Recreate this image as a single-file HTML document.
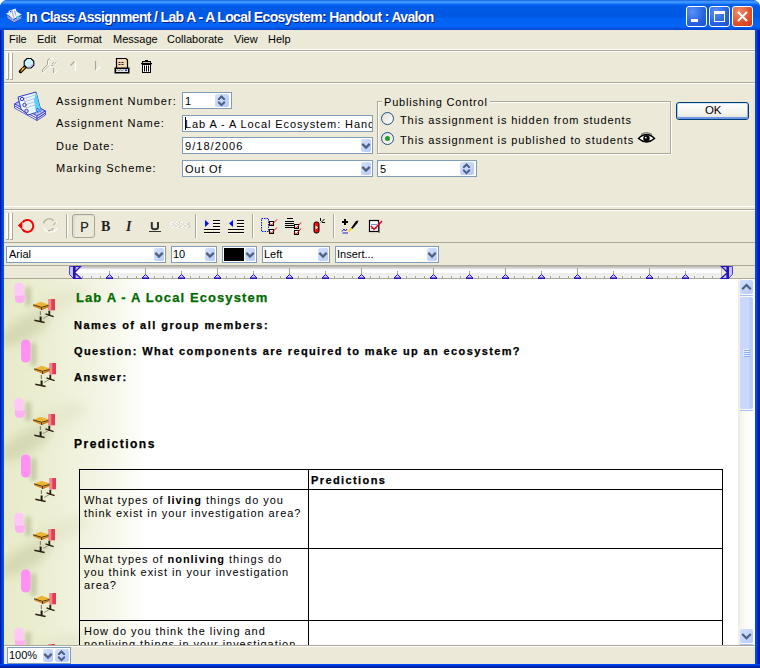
<!DOCTYPE html>
<html><head><meta charset="utf-8">
<style>
*{margin:0;padding:0;box-sizing:border-box}
html,body{width:760px;height:668px;overflow:hidden;background:#fff}
body{position:relative;font-family:"Liberation Sans",sans-serif;font-size:11px;line-height:13px;color:#000}
.a{position:absolute;white-space:nowrap}
#frame{left:0;top:0;width:760px;height:668px;border-radius:8px 8px 0 0;background:linear-gradient(to right,#001EA0 0,#001EA0 1px,#0030C8 1px,#0030C8 2px,#0046E8 2px,#0046E8 3px,#0052F4 3px,#0052F4 755px,#0046EC 755px,#0046EC 757px,#0030C8 757px,#0030C8 758px,#001EA0 758px)}
#title{left:0;top:0;width:760px;height:30px;border-radius:7px 7px 0 0;
 background:linear-gradient(to bottom,#0A48D8 0px,#3D95FF 1px,#3D95FF 3px,#0A6AF8 4px,#005BE8 6px,#0058E2 17px,#0062F2 18px,#0064F4 26px,#0058E8 28px,#0042C8 30px)}
#client{left:4px;top:30px;width:751px;height:634px;background:#ECE9D8}
#bottomframe{left:0;top:664px;width:760px;height:4px;background:linear-gradient(to bottom,#0046EC 0,#0046EC 1px,#0036D0 1px,#0036D0 2px,#0028B8 2px,#0028B8 3px,#001EA0 3px)}
.ttl{left:26px;top:10px;line-height:14px;color:#fff;font-weight:bold;font-size:14px;text-shadow:1px 1px 0 #0A1E8A;letter-spacing:-0.65px}
.tb{position:absolute;width:21px;height:21px;border:1px solid #fff;border-radius:3px;background:radial-gradient(circle at 30% 25%,#5A90F8 0,#2663E0 60%,#1E50D0 100%)}
.tbx{background:radial-gradient(circle at 30% 25%,#EE8E70 0,#E0502A 60%,#C8401C 100%)}
.sepg{background:#ACA899;height:1px}
.sepw{background:#fff;height:1px}
.lbl{letter-spacing:1px}
.box{background:#fff;border:1px solid #7F9DB9}
.cbtn{position:absolute;border-radius:2px;background:linear-gradient(to bottom right,#D6E2FD 0,#C6D6FC 45%,#B6CAF8 100%)}
.chev{position:absolute;left:3px;top:5px;width:9px;height:6px}
.grip{position:absolute;width:7px}
.grip:before,.grip:after{content:"";position:absolute;top:0;bottom:0;width:2px;background:#fff;border-right:1px solid #ACA899;border-bottom:1px solid #ACA899}
.grip:before{left:0}.grip:after{left:4px}
.vsep{position:absolute;width:2px;border-left:1px solid #ACA899;border-right:1px solid #fff}
.doc{font-weight:bold;-webkit-text-stroke:0.25px #000}
.tt{line-height:13px;letter-spacing:0.95px}
.sb{position:absolute;width:13px;border-radius:2px;background:linear-gradient(to bottom right,#D4E0FD,#C2D3FB 60%,#B8CBF8)}
</style></head><body>
<div id="frame" class="a"></div>
<div id="title" class="a"></div>
<div class="a ttl">In Class Assignment / Lab A - A Local Ecosystem: Handout : Avalon</div>

<!-- title buttons -->
<div class="a tb" style="left:686px;top:6px"><div class="a" style="left:4px;top:12px;width:7px;height:3px;background:#fff"></div></div>
<div class="a tb" style="left:709px;top:6px"><div class="a" style="left:4px;top:4px;width:11px;height:11px;border:1px solid #fff;border-top-width:3px"></div></div>
<div class="a tb tbx" style="left:732px;top:6px"><svg class="a" style="left:3px;top:3px" width="13" height="13" viewBox="0 0 13 13"><path d="M2 2L11 11M11 2L2 11" stroke="#fff" stroke-width="2"/></svg></div>
<!-- app icon -->
<svg class="a" style="left:0;top:0" width="26" height="28" viewBox="0 0 26 28">
 <path d="M6 13.8L14 18.6L21.8 14.4L13.5 9.8Z" fill="#D8F0FF"/>
 <path d="M6.5 15.3L14 19.8L21.5 15.8M7 16.8L14 21L21.5 17.2M8 18.3L14 22.3L21 18.6" fill="none" stroke="#4038A8" stroke-width="0.9"/>
 <path d="M7 15.8L14 20.4L21.5 16.5M7.5 17.4L14 21.6L21.3 17.9" fill="none" stroke="#E0F0FF" stroke-width="0.7"/>
 <path d="M8.5 11L15.5 8.5L18.3 16.2L13 19L9.8 16Z" fill="#F4FAFF"/>
 <path d="M12 11L13.5 16.5M14.5 10.5L16 15.5" stroke="#A0A8F0" stroke-width="1.2"/>
 <rect x="10" y="11" width="1.3" height="1.3" fill="#2050E0"/>
 <rect x="11.2" y="9.8" width="1" height="1" fill="#F06040"/>
 <rect x="13.2" y="16.4" width="1" height="1" fill="#F06040"/>
 <path d="M16 16.5L18.5 15.5L19.5 17.5L17 18.5Z" fill="#50D0E0"/>
</svg>
<div id="client" class="a"></div>
<div id="bottomframe" class="a"></div>

<!-- menu -->
<div class="a" style="left:9px;top:33px">File</div>
<div class="a" style="left:37px;top:33px">Edit</div>
<div class="a" style="left:67px;top:33px">Format</div>
<div class="a" style="left:113px;top:33px">Message</div>
<div class="a" style="left:167px;top:33px">Collaborate</div>
<div class="a" style="left:234px;top:33px">View</div>
<div class="a" style="left:268px;top:33px">Help</div>
<div class="a sepw" style="left:4px;top:49px;width:751px"></div>
<div class="a sepg" style="left:4px;top:50px;width:751px"></div>
<div class="a sepw" style="left:4px;top:51px;width:751px"></div>
<div class="grip" style="left:6px;top:53px;height:27px"></div>
<div class="a sepg" style="left:4px;top:82px;width:751px"></div>
<div class="a sepw" style="left:4px;top:83px;width:751px"></div>


<!-- main toolbar icons -->
<svg class="a" style="left:16px;top:55px" width="144" height="22" viewBox="16 55 144 22">
 <path d="M20.5 71.5L25.5 66.5" stroke="#000" stroke-width="3.4" stroke-linecap="round"/>
 <path d="M20.6 71.4L25 67" stroke="#F89020" stroke-width="1.4"/>
 <path d="M22 69.5L23.5 68" stroke="#F8E020" stroke-width="1.2"/>
 <path d="M27 58.5H31L33.8 61.3V65.2L31 68H27L24.2 65.2V61.3Z" fill="#C8F4FF" stroke="#000" stroke-width="1.1"/>
 <path d="M27.5 67H30.5L32.8 64.7" stroke="#B8A8F0" stroke-width="1.2" fill="none"/>
 <g fill="none" stroke-width="1" stroke-linecap="square">
  <path d="M49.5 58.5L47.5 60.5V64.5L42.5 69.5V71.5" stroke="#ACA899"/>
  <path d="M49 66.5L44.5 71" stroke="#ACA899"/>
  <path d="M52.5 63.5L53.5 62.5" stroke="#ACA899"/>
  <path d="M51.5 65.5H53.5L56.5 62" stroke="#ACA899"/>
  <path d="M53.5 68.5V72.5" stroke="#ACA899"/>
  <path d="M48.5 61.5V64.5M50.5 58.5H53.5" stroke="#fff"/>
  <path d="M43.5 72.5L49.5 67H52.5L57.5 62" stroke="#fff"/>
  <path d="M54.5 73.5L56.5 71.5" stroke="#fff"/>
 </g>
 <path d="M70.5 65.5L74.5 61.5" stroke="#ACA899" stroke-width="1.3"/>
 <path d="M75.5 61.5V71" stroke="#fff" stroke-width="1.2"/>
 <path d="M95.5 61V70" stroke="#ACA899" stroke-width="1.2"/>
 <path d="M96 70.5L100.5 66.5" stroke="#fff" stroke-width="1.3"/>
 <path d="M116.5 58.5H126L127.5 60V68.5H116.5Z" fill="#F6D9B2" stroke="#000" stroke-width="1.2"/>
 <path d="M118.5 62.5H120.5M121.5 62.5H123.5M118.5 64.5H120.5M121.5 64.5H123.5" stroke="#222" stroke-width="1"/>
 <rect x="114.5" y="67.5" width="15" height="6" fill="#000"/>
 <rect x="116" y="69" width="12" height="3" fill="#E0E0E0"/>
 <path d="M116 71L117.5 69.5L119 71L120.5 69.5L122 71L123.5 69.5" fill="none" stroke="#707070" stroke-width="0.8"/>
 <rect x="125" y="69.5" width="2" height="1.5" fill="#2030F0"/>
 <rect x="145" y="60" width="3" height="1.2" fill="#000"/>
 <rect x="142.5" y="61.5" width="8" height="2" fill="#C8C4B0" stroke="#000" stroke-width="1"/>
 <rect x="141" y="63" width="11" height="1.3" fill="#000"/>
 <rect x="142.5" y="64.5" width="8" height="8" fill="#fff" stroke="#000" stroke-width="1"/>
 <path d="M144.5 65.5V71.5M146.5 65.5V71.5M148.5 65.5V71.5" stroke="#000" stroke-width="1"/>
</svg>
<!-- form icon -->
<svg class="a" style="left:12px;top:90px" width="36" height="36" viewBox="12 90 36 36">
 <path d="M14.5 104L37 116L45.5 111L23 99Z" fill="#B8BCF8" stroke="#3838C8" stroke-width="1"/>
 <path d="M14.5 104V106L37 118.5V116Z" fill="#fff" stroke="#3838C8" stroke-width="0.8"/>
 <path d="M14.5 106V108L37 120.5V118.5Z" fill="#fff" stroke="#3838C8" stroke-width="0.8"/>
 <path d="M37 116L45.5 111V113L37 118.5ZM37 118.5L45.5 113V115L37 120.5Z" fill="#E0E4FF" stroke="#3838C8" stroke-width="0.8"/>
 <path d="M18 97L36 92L41 111L28 115L21 109Z" fill="#E8F8FF" stroke="#3838C8" stroke-width="1"/>
 <path d="M36 92L41 111L36 113L34 100Z" fill="#50D8F8"/>
 <path d="M24 102L36 98M25 105L37 101M26 108L38 104M23 99L35 95" stroke="#A8B0F0" stroke-width="0.8"/>
 <path d="M24 97.5L27 112" stroke="#F07070" stroke-width="0.8" stroke-dasharray="1.2 1.2"/>
 <circle cx="22" cy="99" r="1.7" fill="none" stroke="#3838C8" stroke-width="1"/>
 <circle cx="24.5" cy="105" r="1.7" fill="none" stroke="#3838C8" stroke-width="1"/>
 <circle cx="26.5" cy="111" r="1.7" fill="none" stroke="#3838C8" stroke-width="1"/>
 <path d="M37 108L39.5 110L37 112Z" fill="#fff" stroke="#3838C8" stroke-width="0.8"/>
</svg>
<!-- eye icon -->
<svg class="a" style="left:637px;top:131px" width="19" height="15" viewBox="0 0 19 15">
 <path d="M1.5 7.5Q9.5 -0.5 17.5 7.5Q9.5 14.5 1.5 7.5Z" fill="#fff" stroke="#000" stroke-width="1.5"/>
 <circle cx="9.5" cy="7.3" r="3.2" fill="#000"/>
 <circle cx="8.8" cy="6.6" r="0.9" fill="#fff"/>
 <path d="M4 3.5Q9.5 0 15 3.5" fill="none" stroke="#555" stroke-width="1"/>
</svg>

<!-- form -->
<div class="a lbl" style="left:56px;top:95px">Assignment Number:</div>
<div class="a lbl" style="left:56px;top:117px">Assignment Name:</div>
<div class="a lbl" style="left:56px;top:140px">Due Date:</div>
<div class="a lbl" style="left:56px;top:162px">Marking Scheme:</div>


<!-- form controls -->
<div class="a box" style="left:182px;top:92px;width:50px;height:17px"><div class="a" style="left:2px;top:2px">1</div><div class="cbtn" style="left:32px;top:1px;width:14px;height:13px"><svg class="a" style="left:0;top:0" width="14" height="13" viewBox="0 0 14 13"><path d="M2.6 6L6.5 2.1L10.4 6H8.6L6.5 3.9L4.4 6Z M2.6 7.6L6.5 11.5L10.4 7.6H8.6L6.5 9.7L4.4 7.6Z" fill="#4D6185"/><path d="M3.2 5.5L6.5 2.2L9.8 5.5M3.2 8.1L6.5 11.4L9.8 8.1" fill="none" stroke="#4D6185" stroke-width="1.6"/></svg></div></div>
<div class="a box" style="left:182px;top:115px;width:191px;height:17px;overflow:hidden"><div class="a" style="left:2px;top:2px;letter-spacing:0.9px">Lab A - A Local Ecosystem: Handout</div><div class="a" style="left:2px;top:1px;width:1px;height:13px;background:#000"></div></div>
<div class="a box" style="left:182px;top:137px;width:191px;height:17px"><div class="a" style="left:2px;top:2px;letter-spacing:1.05px">9/18/2006</div>
 <div class="cbtn" style="left:178px;top:1px;width:10px;height:13px"><svg class="a" style="left:0;top:0" width="10" height="13" viewBox="0 0 10 13"><path d="M1.3 4.9L5 8.6L8.7 4.9" fill="none" stroke="#4D6185" stroke-width="2.3"/></svg></div></div>
<div class="a box" style="left:182px;top:160px;width:191px;height:17px"><div class="a" style="left:2px;top:2px;letter-spacing:0.8px">Out Of</div>
 <div class="cbtn" style="left:178px;top:1px;width:10px;height:13px"><svg class="a" style="left:0;top:0" width="10" height="13" viewBox="0 0 10 13"><path d="M1.3 4.9L5 8.6L8.7 4.9" fill="none" stroke="#4D6185" stroke-width="2.3"/></svg></div></div>
<div class="a box" style="left:377px;top:160px;width:100px;height:17px"><div class="a" style="left:2px;top:2px">5</div>
 <div class="cbtn" style="left:82px;top:1px;width:14px;height:13px"><svg class="a" style="left:0;top:0" width="14" height="13" viewBox="0 0 14 13"><path d="M2.6 6L6.5 2.1L10.4 6H8.6L6.5 3.9L4.4 6Z M2.6 7.6L6.5 11.5L10.4 7.6H8.6L6.5 9.7L4.4 7.6Z" fill="#4D6185"/><path d="M3.2 5.5L6.5 2.2L9.8 5.5M3.2 8.1L6.5 11.4L9.8 8.1" fill="none" stroke="#4D6185" stroke-width="1.6"/></svg></div></div>

<!-- publishing group -->
<div class="a" style="left:377px;top:101px;width:294px;height:53px;border:1px solid #ACA899;box-shadow:inset 1px 1px 0 #fff,1px 1px 0 #fff"></div>
<div class="a" style="left:382px;top:96px;padding:0 2px;background:#ECE9D8;letter-spacing:0.8px">Publishing Control</div>
<svg class="a" style="left:381px;top:112px" width="13" height="13" viewBox="0 0 13 13"><defs><linearGradient id="rg" x1="0" y1="0" x2="1" y2="1"><stop offset="0" stop-color="#DCDCD7"/><stop offset="1" stop-color="#fff"/></linearGradient></defs><circle cx="6.5" cy="6.5" r="6" fill="url(#rg)" stroke="#1C5180" stroke-width="1"/></svg>
<svg class="a" style="left:381px;top:132px" width="13" height="13" viewBox="0 0 13 13"><circle cx="6.5" cy="6.5" r="6" fill="url(#rg)" stroke="#1C5180" stroke-width="1"/><circle cx="6.5" cy="6.5" r="2.5" fill="#21A121"/></svg>
<div class="a lbl" style="left:400px;top:114px;letter-spacing:0.9px">This assignment is hidden from students</div>
<div class="a lbl" style="left:400px;top:134px;letter-spacing:0.9px">This assignment is published to students</div>
<!-- OK button -->
<div class="a" style="left:676px;top:102px;width:73px;height:18px;border:1px solid #003C74;border-radius:3px;background:linear-gradient(to bottom,#FFFFFF,#F4F4EE 60%,#E6E4DA);box-shadow:inset 0 1px 0 #CEE7FF,inset 1px 0 0 #A8C8F4,inset -1px 0 0 #8EB4EE,inset 0 -2px 0 #6C98E8"></div>
<div class="a" style="left:705px;top:104px;letter-spacing:-0.2px;font-size:11.5px">OK</div>

<div class="a sepw" style="left:4px;top:206px;width:751px"></div>
<div class="a sepg" style="left:4px;top:209px;width:751px"></div>
<div class="a sepw" style="left:4px;top:210px;width:751px"></div>
<div class="grip" style="left:6px;top:213px;height:27px"></div>
<div class="a sepg" style="left:4px;top:242px;width:751px"></div>

<!-- format toolbar -->
<div class="vsep" style="left:66px;top:214px;height:24px"></div>
<div class="a" style="left:72px;top:214px;width:23px;height:24px;border:1px solid #A8A590;border-radius:3px;background:#ECE9D8;box-shadow:inset 3px 2px 0 -1px #DCDCD8"></div>
<div class="a" style="left:80px;top:221px;font-family:'Liberation Mono',monospace;font-size:15px;line-height:15px;color:#222;font-weight:normal">P</div>
<div class="a" style="left:101px;top:220px;font-family:'Liberation Serif',serif;font-size:14px;line-height:14px;font-weight:bold;color:#222">B</div>
<div class="a" style="left:126px;top:220px;font-family:'Liberation Serif',serif;font-size:14px;line-height:14px;font-style:italic;font-weight:bold;color:#222">I</div>
<svg class="a" style="left:148px;top:220px" width="14" height="13" viewBox="148 220 14 13"><path d="M151.8 222V227.3Q151.8 229.2 154.8 229.2Q158 229.2 158 227.3V222" fill="none" stroke="#333" stroke-width="2"/><rect x="149" y="231" width="12" height="1" fill="#333"/></svg>
<div class="a" style="left:170px;top:220px;font-size:9px;line-height:10px;font-weight:bold;color:#fff;text-shadow:1px 0 0 #B0AD9C;letter-spacing:-0.6px;transform:scaleX(0.85);transform-origin:0 0">SSSS</div>
<svg class="a" style="left:14px;top:212px" width="380" height="26" viewBox="14 212 380 26">
 <path d="M22.2 229A6 6 0 1 0 22.6 222.3" fill="none" stroke="#F00000" stroke-width="2"/>
 <path d="M17.8 225.6L22.3 221.2V229.4Z" fill="#F00000"/>
 <path d="M43.5 223.5A6 6 0 0 1 53.5 220.5" fill="none" stroke="#ACA899" stroke-width="1.1"/>
 <path d="M43.8 227.5A6 6 0 0 0 52 231.5" fill="none" stroke="#fff" stroke-width="1.1"/>
 <path d="M48 230.5A5 5 0 0 0 53.5 228" fill="none" stroke="#ACA899" stroke-width="1.1"/>
 <path d="M53 232A6 6 0 0 0 57 228" fill="none" stroke="#fff" stroke-width="1.1"/>
 <path d="M55.5 222.5L53.5 225" stroke="#ACA899" stroke-width="1.1"/>
 <path d="M56.5 221.5V223" stroke="#fff" stroke-width="1.1"/>
 <g fill="#000">
  <rect x="213" y="220" width="7" height="1"/><rect x="213" y="223" width="7" height="1"/><rect x="213" y="226" width="7" height="1"/>
  <rect x="204" y="229" width="16" height="1"/><rect x="204" y="232" width="16" height="1"/>
  <rect x="237" y="220" width="7" height="1"/><rect x="237" y="223" width="7" height="1"/><rect x="237" y="226" width="7" height="1"/>
  <rect x="228" y="229" width="16" height="1"/><rect x="228" y="232" width="16" height="1"/>
 </g>
 <g fill="#FFF8E0">
  <rect x="213" y="221" width="7" height="1"/><rect x="213" y="224" width="7" height="1"/><rect x="213" y="227" width="7" height="1"/>
  <rect x="204" y="230" width="16" height="1"/><rect x="204" y="233" width="16" height="1"/>
  <rect x="237" y="221" width="7" height="1"/><rect x="237" y="224" width="7" height="1"/><rect x="237" y="227" width="7" height="1"/>
  <rect x="228" y="230" width="16" height="1"/><rect x="228" y="233" width="16" height="1"/>
 </g>
 <path d="M205 220V227L209 223.5Z" fill="#0010F0"/>
 <path d="M233 220V227L229 223.5Z" fill="#0010F0"/>
 <rect x="261.5" y="218.5" width="7" height="13" fill="none" stroke="#0018E8" stroke-width="1" stroke-dasharray="1.5 1"/>
 <rect x="269.5" y="221.5" width="4" height="4" fill="#fff" stroke="#000" stroke-width="1"/>
 <rect x="269.5" y="229.5" width="4" height="4" fill="#fff" stroke="#000" stroke-width="1"/>
 <path d="M270 223.5L271.5 225L277 219.5M270 231.5L271.5 233L277 227.5" fill="none" stroke="#F00000" stroke-width="1"/>
 <g fill="#000"><rect x="287" y="218" width="6" height="1"/><rect x="285" y="221" width="9" height="1"/><rect x="285" y="223" width="9" height="1"/><rect x="285" y="225" width="9" height="1"/><rect x="285" y="227" width="9" height="1"/></g>
 <rect x="294.5" y="224.5" width="4" height="4" fill="#fff" stroke="#000" stroke-width="1"/>
 <rect x="294.5" y="230.5" width="4" height="4" fill="#fff" stroke="#000" stroke-width="1"/>
 <path d="M295 226.5L296.5 228L301 222.5M295 232.5L296.5 234L301 228.5" fill="none" stroke="#F00000" stroke-width="1"/>
 <rect x="314" y="222" width="5" height="11" rx="2" fill="#F01010" stroke="#000" stroke-width="1"/>
 <path d="M315.5 225.5L318 227.5L315.5 229.5Z" fill="#fff"/>
 <path d="M320.5 218V221M321 222.5L324.5 219M322 222.5H325" stroke="#000" stroke-width="1" fill="none"/>
 <path d="M342 222H348M345 219V225" stroke="#000" stroke-width="2"/>
 <path d="M351 228L356 221L358.5 220.5L357.5 223L352.5 229Z" fill="#000"/>
 <path d="M348.5 231.5L351.5 228.5" stroke="#F8D020" stroke-width="1.8"/>
 <path d="M342 231.5L344 229L345.5 231L347 229M342.5 233H348" fill="none" stroke="#2020D0" stroke-width="1"/>
 <rect x="369.5" y="220.5" width="9" height="11" fill="#fff" stroke="#000" stroke-width="1.2"/>
 <rect x="378.5" y="222" width="1.2" height="11" fill="#555"/>
 <path d="M371 224.5H377M371 228.5H377" stroke="#8888E8" stroke-width="1"/>
 <path d="M371 226L374 229.5L382 221" fill="none" stroke="#F00020" stroke-width="1.5"/>
</svg>
<div class="vsep" style="left:195px;top:214px;height:24px"></div>
<div class="vsep" style="left:252px;top:214px;height:24px"></div>
<div class="vsep" style="left:333px;top:214px;height:24px"></div>

<!-- font row -->
<div class="a box" style="left:6px;top:246px;width:160px;height:17px"><div class="a" style="left:2px;top:1px">Arial</div>
 <div class="cbtn" style="left:147px;top:1px;width:10px;height:13px"><svg class="a" style="left:0;top:0" width="10" height="13" viewBox="0 0 10 13"><path d="M1.3 4.9L5 8.6L8.7 4.9" fill="none" stroke="#4D6185" stroke-width="2.3"/></svg></div></div>
<div class="a box" style="left:171px;top:246px;width:46px;height:17px"><div class="a" style="left:1px;top:1px">10</div>
 <div class="cbtn" style="left:33px;top:1px;width:10px;height:13px"><svg class="a" style="left:0;top:0" width="10" height="13" viewBox="0 0 10 13"><path d="M1.3 4.9L5 8.6L8.7 4.9" fill="none" stroke="#4D6185" stroke-width="2.3"/></svg></div></div>
<div class="a box" style="left:222px;top:246px;width:35px;height:17px"><div class="a" style="left:1px;top:1px;width:20px;height:13px;background:#000"></div>
 <div class="cbtn" style="left:22px;top:1px;width:10px;height:13px"><svg class="a" style="left:0;top:0" width="10" height="13" viewBox="0 0 10 13"><path d="M1.3 4.9L5 8.6L8.7 4.9" fill="none" stroke="#4D6185" stroke-width="2.3"/></svg></div></div>
<div class="a box" style="left:262px;top:246px;width:68px;height:17px"><div class="a" style="left:1px;top:1px">Left</div>
 <div class="cbtn" style="left:55px;top:1px;width:10px;height:13px"><svg class="a" style="left:0;top:0" width="10" height="13" viewBox="0 0 10 13"><path d="M1.3 4.9L5 8.6L8.7 4.9" fill="none" stroke="#4D6185" stroke-width="2.3"/></svg></div></div>
<div class="a box" style="left:335px;top:246px;width:104px;height:17px"><div class="a" style="left:1px;top:1px">Insert...</div>
 <div class="cbtn" style="left:91px;top:1px;width:10px;height:13px"><svg class="a" style="left:0;top:0" width="10" height="13" viewBox="0 0 10 13"><path d="M1.3 4.9L5 8.6L8.7 4.9" fill="none" stroke="#4D6185" stroke-width="2.3"/></svg></div></div>
<div class="a sepg" style="left:4px;top:265px;width:751px"></div>

<!-- ruler -->
<svg class="a" style="left:0;top:0" width="760" height="290" viewBox="0 0 760 290"><defs><linearGradient id="rul" x1="0" y1="0" x2="0" y2="1"><stop offset="0" stop-color="#B4B4B0"/><stop offset="0.17" stop-color="#D4D4D2"/><stop offset="0.3" stop-color="#FAFAFA"/><stop offset="0.55" stop-color="#FFFFFF"/><stop offset="0.6" stop-color="#ECECEC"/><stop offset="1" stop-color="#F2F2F2"/></linearGradient></defs><rect x="73" y="266" width="649" height="12" fill="url(#rul)"/><rect x="4" y="278" width="751" height="1" fill="#ACA899"/><rect x="721" y="266" width="1" height="12" fill="#B8B5A5"/><rect x="82" y="276" width="1" height="2" fill="#A8A590"/><rect x="91" y="276" width="1" height="2" fill="#A8A590"/><rect x="100" y="276" width="1" height="2" fill="#A8A590"/><rect x="109" y="271" width="1" height="3" fill="#A8A590"/><path d="M109.5 274.5 L106 278 L113 278 Z" fill="#C8CEFF" stroke="#2A10B8" stroke-width="1"/><rect x="106" y="278" width="7" height="1" fill="#2A10B8"/><rect x="118" y="276" width="1" height="2" fill="#A8A590"/><rect x="127" y="276" width="1" height="2" fill="#A8A590"/><rect x="136" y="276" width="1" height="2" fill="#A8A590"/><rect x="145" y="268" width="1" height="6" fill="#A8A590"/><path d="M145.5 274.5 L142 278 L149 278 Z" fill="#C8CEFF" stroke="#2A10B8" stroke-width="1"/><rect x="142" y="278" width="7" height="1" fill="#2A10B8"/><rect x="154" y="276" width="1" height="2" fill="#A8A590"/><rect x="163" y="276" width="1" height="2" fill="#A8A590"/><rect x="172" y="276" width="1" height="2" fill="#A8A590"/><rect x="181" y="271" width="1" height="3" fill="#A8A590"/><path d="M181.5 274.5 L178 278 L185 278 Z" fill="#C8CEFF" stroke="#2A10B8" stroke-width="1"/><rect x="178" y="278" width="7" height="1" fill="#2A10B8"/><rect x="190" y="276" width="1" height="2" fill="#A8A590"/><rect x="199" y="276" width="1" height="2" fill="#A8A590"/><rect x="208" y="276" width="1" height="2" fill="#A8A590"/><rect x="217" y="268" width="1" height="6" fill="#A8A590"/><path d="M217.5 274.5 L214 278 L221 278 Z" fill="#C8CEFF" stroke="#2A10B8" stroke-width="1"/><rect x="214" y="278" width="7" height="1" fill="#2A10B8"/><rect x="226" y="276" width="1" height="2" fill="#A8A590"/><rect x="235" y="276" width="1" height="2" fill="#A8A590"/><rect x="244" y="276" width="1" height="2" fill="#A8A590"/><rect x="253" y="271" width="1" height="3" fill="#A8A590"/><path d="M253.5 274.5 L250 278 L257 278 Z" fill="#C8CEFF" stroke="#2A10B8" stroke-width="1"/><rect x="250" y="278" width="7" height="1" fill="#2A10B8"/><rect x="262" y="276" width="1" height="2" fill="#A8A590"/><rect x="271" y="276" width="1" height="2" fill="#A8A590"/><rect x="280" y="276" width="1" height="2" fill="#A8A590"/><rect x="289" y="268" width="1" height="6" fill="#A8A590"/><path d="M289.5 274.5 L286 278 L293 278 Z" fill="#C8CEFF" stroke="#2A10B8" stroke-width="1"/><rect x="286" y="278" width="7" height="1" fill="#2A10B8"/><rect x="298" y="276" width="1" height="2" fill="#A8A590"/><rect x="307" y="276" width="1" height="2" fill="#A8A590"/><rect x="316" y="276" width="1" height="2" fill="#A8A590"/><rect x="325" y="271" width="1" height="3" fill="#A8A590"/><path d="M325.5 274.5 L322 278 L329 278 Z" fill="#C8CEFF" stroke="#2A10B8" stroke-width="1"/><rect x="322" y="278" width="7" height="1" fill="#2A10B8"/><rect x="334" y="276" width="1" height="2" fill="#A8A590"/><rect x="343" y="276" width="1" height="2" fill="#A8A590"/><rect x="352" y="276" width="1" height="2" fill="#A8A590"/><rect x="361" y="268" width="1" height="6" fill="#A8A590"/><path d="M361.5 274.5 L358 278 L365 278 Z" fill="#C8CEFF" stroke="#2A10B8" stroke-width="1"/><rect x="358" y="278" width="7" height="1" fill="#2A10B8"/><rect x="370" y="276" width="1" height="2" fill="#A8A590"/><rect x="379" y="276" width="1" height="2" fill="#A8A590"/><rect x="388" y="276" width="1" height="2" fill="#A8A590"/><rect x="397" y="271" width="1" height="3" fill="#A8A590"/><path d="M397.5 274.5 L394 278 L401 278 Z" fill="#C8CEFF" stroke="#2A10B8" stroke-width="1"/><rect x="394" y="278" width="7" height="1" fill="#2A10B8"/><rect x="406" y="276" width="1" height="2" fill="#A8A590"/><rect x="415" y="276" width="1" height="2" fill="#A8A590"/><rect x="424" y="276" width="1" height="2" fill="#A8A590"/><rect x="433" y="268" width="1" height="6" fill="#A8A590"/><path d="M433.5 274.5 L430 278 L437 278 Z" fill="#C8CEFF" stroke="#2A10B8" stroke-width="1"/><rect x="430" y="278" width="7" height="1" fill="#2A10B8"/><rect x="442" y="276" width="1" height="2" fill="#A8A590"/><rect x="451" y="276" width="1" height="2" fill="#A8A590"/><rect x="460" y="276" width="1" height="2" fill="#A8A590"/><rect x="469" y="271" width="1" height="3" fill="#A8A590"/><path d="M469.5 274.5 L466 278 L473 278 Z" fill="#C8CEFF" stroke="#2A10B8" stroke-width="1"/><rect x="466" y="278" width="7" height="1" fill="#2A10B8"/><rect x="478" y="276" width="1" height="2" fill="#A8A590"/><rect x="487" y="276" width="1" height="2" fill="#A8A590"/><rect x="496" y="276" width="1" height="2" fill="#A8A590"/><rect x="505" y="268" width="1" height="6" fill="#A8A590"/><path d="M505.5 274.5 L502 278 L509 278 Z" fill="#C8CEFF" stroke="#2A10B8" stroke-width="1"/><rect x="502" y="278" width="7" height="1" fill="#2A10B8"/><rect x="514" y="276" width="1" height="2" fill="#A8A590"/><rect x="523" y="276" width="1" height="2" fill="#A8A590"/><rect x="532" y="276" width="1" height="2" fill="#A8A590"/><rect x="541" y="271" width="1" height="3" fill="#A8A590"/><path d="M541.5 274.5 L538 278 L545 278 Z" fill="#C8CEFF" stroke="#2A10B8" stroke-width="1"/><rect x="538" y="278" width="7" height="1" fill="#2A10B8"/><rect x="550" y="276" width="1" height="2" fill="#A8A590"/><rect x="559" y="276" width="1" height="2" fill="#A8A590"/><rect x="568" y="276" width="1" height="2" fill="#A8A590"/><rect x="577" y="268" width="1" height="6" fill="#A8A590"/><path d="M577.5 274.5 L574 278 L581 278 Z" fill="#C8CEFF" stroke="#2A10B8" stroke-width="1"/><rect x="574" y="278" width="7" height="1" fill="#2A10B8"/><rect x="586" y="276" width="1" height="2" fill="#A8A590"/><rect x="595" y="276" width="1" height="2" fill="#A8A590"/><rect x="604" y="276" width="1" height="2" fill="#A8A590"/><rect x="613" y="271" width="1" height="3" fill="#A8A590"/><path d="M613.5 274.5 L610 278 L617 278 Z" fill="#C8CEFF" stroke="#2A10B8" stroke-width="1"/><rect x="610" y="278" width="7" height="1" fill="#2A10B8"/><rect x="622" y="276" width="1" height="2" fill="#A8A590"/><rect x="631" y="276" width="1" height="2" fill="#A8A590"/><rect x="640" y="276" width="1" height="2" fill="#A8A590"/><rect x="649" y="268" width="1" height="6" fill="#A8A590"/><path d="M649.5 274.5 L646 278 L653 278 Z" fill="#C8CEFF" stroke="#2A10B8" stroke-width="1"/><rect x="646" y="278" width="7" height="1" fill="#2A10B8"/><rect x="658" y="276" width="1" height="2" fill="#A8A590"/><rect x="667" y="276" width="1" height="2" fill="#A8A590"/><rect x="676" y="276" width="1" height="2" fill="#A8A590"/><rect x="685" y="271" width="1" height="3" fill="#A8A590"/><path d="M685.5 274.5 L682 278 L689 278 Z" fill="#C8CEFF" stroke="#2A10B8" stroke-width="1"/><rect x="682" y="278" width="7" height="1" fill="#2A10B8"/><rect x="694" y="276" width="1" height="2" fill="#A8A590"/><rect x="703" y="276" width="1" height="2" fill="#A8A590"/><rect x="712" y="276" width="1" height="2" fill="#A8A590"/><path d="M69.5 266.5H73.5V278.5L69.5 274.5Z" fill="#C0C8FF" stroke="#5040D0" stroke-width="1"/><rect x="73" y="266" width="2" height="13" fill="#2A10B8"/><path d="M75 266.5H80.5L74.5 272.5L81 278.5H75Z" fill="#B8C0FF" stroke="#2A10B8" stroke-width="1.2"/><path d="M732.5 266.5H728.5V278.5L732.5 274.5Z" fill="#C0C8FF" stroke="#5040D0" stroke-width="1"/><rect x="727" y="266" width="2" height="13" fill="#2A10B8"/><path d="M727 266.5H721.5L727.5 272.5L721 278.5H727Z" fill="#B8C0FF" stroke="#2A10B8" stroke-width="1.2"/></svg>
<!-- document -->
<div class="a" style="left:0;top:0;width:738px;height:645px;overflow:hidden">
<div class="a" style="left:4px;top:279px;width:734px;height:366px;background:#fff;overflow:hidden">
 <svg class="a" style="left:0;top:0" width="200" height="366" viewBox="0 0 200 366">
 <defs>
  <linearGradient id="bgg" x1="0" y1="0" x2="1" y2="0">
   <stop offset="0" stop-color="#E8EBCA"/><stop offset="0.2" stop-color="#EBEED1"/><stop offset="0.35" stop-color="#F0F2DC"/><stop offset="0.5" stop-color="#F4F5E6"/><stop offset="0.62" stop-color="#FAFBF2"/><stop offset="0.72" stop-color="#FFFFFF"/><stop offset="1" stop-color="#FFFFFF"/>
  </linearGradient>
  <filter id="bl" x="-50%" y="-50%" width="200%" height="200%"><feGaussianBlur stdDeviation="5"/></filter>
  <filter id="bl2" x="-100%" y="-50%" width="300%" height="200%"><feGaussianBlur stdDeviation="2"/></filter>
  <pattern id="tile" x="0" y="0" width="200" height="115" patternUnits="userSpaceOnUse">
   <ellipse cx="20" cy="50" rx="30" ry="11" transform="rotate(-30 20 50)" fill="#C8CCA4" opacity="0.6" filter="url(#bl)"/>
   <ellipse cx="55" cy="22" rx="30" ry="10" transform="rotate(-20 55 22)" fill="#D8DAB8" opacity="0.35" filter="url(#bl)"/>
   <rect x="21" y="8" width="6" height="19" rx="2" fill="#B8BC94" opacity="0.75" filter="url(#bl2)"/>
   <rect x="26.5" y="64" width="6" height="23" rx="2" fill="#B8BC94" opacity="0.75" filter="url(#bl2)"/>
   <path d="M10 8Q10 4 14.5 4H17Q19.5 4 19.5 8V15Q21.5 17 21.5 19.5Q21.5 24 16 24Q11 24 11 19.5Z" fill="#FFC8F6"/>
   <path d="M11 16Q14 18 21 16Q21.5 24 16 24Q11 24 11 19.5Z" fill="#FFB0F0"/>
   <rect x="17" y="60.5" width="9.5" height="23" rx="4.5" fill="#FF90F4"/>
   <g transform="translate(0,0)">
   <path d="M29 26L36.5 22.8L46.5 26L38 30.5Z" fill="#ECB434"/>
   <path d="M29 26L38 29.5L38 31L29.5 27.5Z" fill="#D88A1C"/>
   <path d="M38 29.5L46.5 26V27.5L38 31Z" fill="#C87818"/>
   <path d="M29 25.8L37.5 28.3L45 26.3" fill="none" stroke="#3A2A10" stroke-width="0.9"/>
   <path d="M37.5 28.3V31" stroke="#3A2A10" stroke-width="0.9"/>
   <path d="M44.6 20H51V31.3H44.6Z" fill="#E23C58"/>
   <path d="M44.6 20H47.3V31.3H44.6Z" fill="#F08A8A"/>
   <rect x="35.8" y="32" width="1.2" height="4" fill="#8A8478"/>
   <rect x="35.6" y="37.5" width="2" height="5.5" fill="#1E1810"/>
   <path d="M30.3 41.2L40.6 43.5" stroke="#2A1E10" stroke-width="1.4"/>
   <rect x="44.4" y="31.8" width="1.8" height="5" fill="#1E1810"/>
   <path d="M41.5 34.9L49.6 37.6" stroke="#2A1E10" stroke-width="1.4"/>
   <path d="M39 39.5L44 36.8" stroke="#8A8478" stroke-width="0.9"/>
  </g>
   <g transform="translate(1,64)">
   <path d="M29 26L36.5 22.8L46.5 26L38 30.5Z" fill="#ECB434"/>
   <path d="M29 26L38 29.5L38 31L29.5 27.5Z" fill="#D88A1C"/>
   <path d="M38 29.5L46.5 26V27.5L38 31Z" fill="#C87818"/>
   <path d="M29 25.8L37.5 28.3L45 26.3" fill="none" stroke="#3A2A10" stroke-width="0.9"/>
   <path d="M37.5 28.3V31" stroke="#3A2A10" stroke-width="0.9"/>
   <path d="M44.6 20H51V31.3H44.6Z" fill="#E23C58"/>
   <path d="M44.6 20H47.3V31.3H44.6Z" fill="#F08A8A"/>
   <rect x="35.8" y="32" width="1.2" height="4" fill="#8A8478"/>
   <rect x="35.6" y="37.5" width="2" height="5.5" fill="#1E1810"/>
   <path d="M30.3 41.2L40.6 43.5" stroke="#2A1E10" stroke-width="1.4"/>
   <rect x="44.4" y="31.8" width="1.8" height="5" fill="#1E1810"/>
   <path d="M41.5 34.9L49.6 37.6" stroke="#2A1E10" stroke-width="1.4"/>
   <path d="M39 39.5L44 36.8" stroke="#8A8478" stroke-width="0.9"/>
  </g>
  </pattern>
 </defs>
 <rect x="0" y="0" width="200" height="366" fill="url(#bgg)"/>
 <rect x="0" y="0" width="200" height="366" fill="url(#tile)"/>
</svg>
</div>
<div class="a" style="left:76px;top:291px;color:#006A00;font-weight:bold;font-size:13px;line-height:14px;letter-spacing:1.1px;-webkit-text-stroke:0.25px #006A00">Lab A - A Local Ecosystem</div>
<div class="a doc" style="left:74px;top:319px;letter-spacing:1.5px">Names of all group members:</div>
<div class="a doc" style="left:74px;top:345px;letter-spacing:1.38px">Question: What components are required to make up an ecosystem?</div>
<div class="a doc" style="left:74px;top:371px;letter-spacing:1.45px">Answer:</div>
<div class="a doc" style="left:74px;top:437px;font-size:12px;line-height:14px;letter-spacing:1.5px">Predictions</div>
<!-- table -->
<div class="a" style="left:79px;top:469px;width:644px;height:180px;border:1px solid #000;border-bottom:none"></div>
<div class="a" style="left:308px;top:469px;width:1px;height:180px;background:#000"></div>
<div class="a" style="left:79px;top:489px;width:644px;height:1px;background:#000"></div>
<div class="a" style="left:79px;top:548px;width:644px;height:1px;background:#000"></div>
<div class="a" style="left:79px;top:620px;width:644px;height:1px;background:#000"></div>
<div class="a doc" style="left:311px;top:474px;letter-spacing:1.4px">Predictions</div>
<div class="a tt" style="left:84px;top:494px">What types of <b>living</b> things do you<br>think exist in your investigation area?</div>
<div class="a tt" style="left:84px;top:553px">What types of <b>nonliving</b> things do<br>you think exist in your investigation<br>area?</div>
<div class="a tt" style="left:84px;top:625px">How do you think the living and<br>nonliving things in your investigation</div>
</div>
<!-- scrollbar -->
<div class="a" style="left:738px;top:279px;width:17px;height:366px;background:linear-gradient(to right,#EEEDE5 0,#EEEDE5 1px,#F4F4EC 2px,#FAFAF4 6px,#FDFDFA 12px,#FFFFFF 17px)"></div>
<div class="a sb" style="left:740px;top:280px;height:14px"></div>
<div class="a" style="left:740px;top:295px;width:13px;height:1px;background:#A8C0F0"></div>
<svg class="a" style="left:740px;top:280px" width="13" height="14" viewBox="0 0 13 14"><path d="M2.2 9.3L6.5 5L10.8 9.3" fill="none" stroke="#4D6185" stroke-width="2.2"/></svg>
<div class="a" style="left:740px;top:410px;width:13px;height:1px;background:#A8C0F0"></div>
<div class="a sb" style="left:740px;top:297px;height:112px;background:linear-gradient(to right,#C9D8FC 0,#C9D8FC 9px,#BACCF7 10px,#BACCF7 13px)"></div>
<div class="a" style="left:743px;top:349px;width:6px;height:1px;background:#EEF4FE;box-shadow:0 2px 0 #EEF4FE,0 4px 0 #EEF4FE,0 6px 0 #EEF4FE"></div>
<div class="a" style="left:744px;top:350px;width:6px;height:1px;background:#8CAEF8;box-shadow:0 2px 0 #8CAEF8,0 4px 0 #8CAEF8,0 6px 0 #8CAEF8"></div>
<div class="a sb" style="left:740px;top:629px;height:14px"></div>
<div class="a" style="left:740px;top:644px;width:13px;height:1px;background:#A8C0F0"></div>
<svg class="a" style="left:740px;top:629px" width="13" height="15" viewBox="0 0 13 15"><path d="M2.2 5L6.5 9.3L10.8 5" fill="none" stroke="#4D6185" stroke-width="2.2"/></svg>
<!-- status bar -->
<div class="a sepg" style="left:4px;top:645px;width:751px"></div>
<div class="a sepw" style="left:4px;top:646px;width:751px"></div>
<div class="a box" style="left:7px;top:647px;width:64px;height:17px"><div class="a" style="left:1px;top:1px">100%</div>
 <div class="cbtn" style="left:35px;top:1px;width:10px;height:13px"><svg class="a" style="left:0;top:0" width="10" height="13" viewBox="0 0 10 13"><path d="M1.3 4.9L5 8.6L8.7 4.9" fill="none" stroke="#4D6185" stroke-width="2.3"/></svg></div>
 <div class="cbtn" style="left:47px;top:1px;width:14px;height:13px"><svg class="a" style="left:0;top:0" width="14" height="13" viewBox="0 0 14 13"><path d="M2.6 6L6.5 2.1L10.4 6H8.6L6.5 3.9L4.4 6Z M2.6 7.6L6.5 11.5L10.4 7.6H8.6L6.5 9.7L4.4 7.6Z" fill="#4D6185"/><path d="M3.2 5.5L6.5 2.2L9.8 5.5M3.2 8.1L6.5 11.4L9.8 8.1" fill="none" stroke="#4D6185" stroke-width="1.6"/></svg></div></div>
</body></html>
